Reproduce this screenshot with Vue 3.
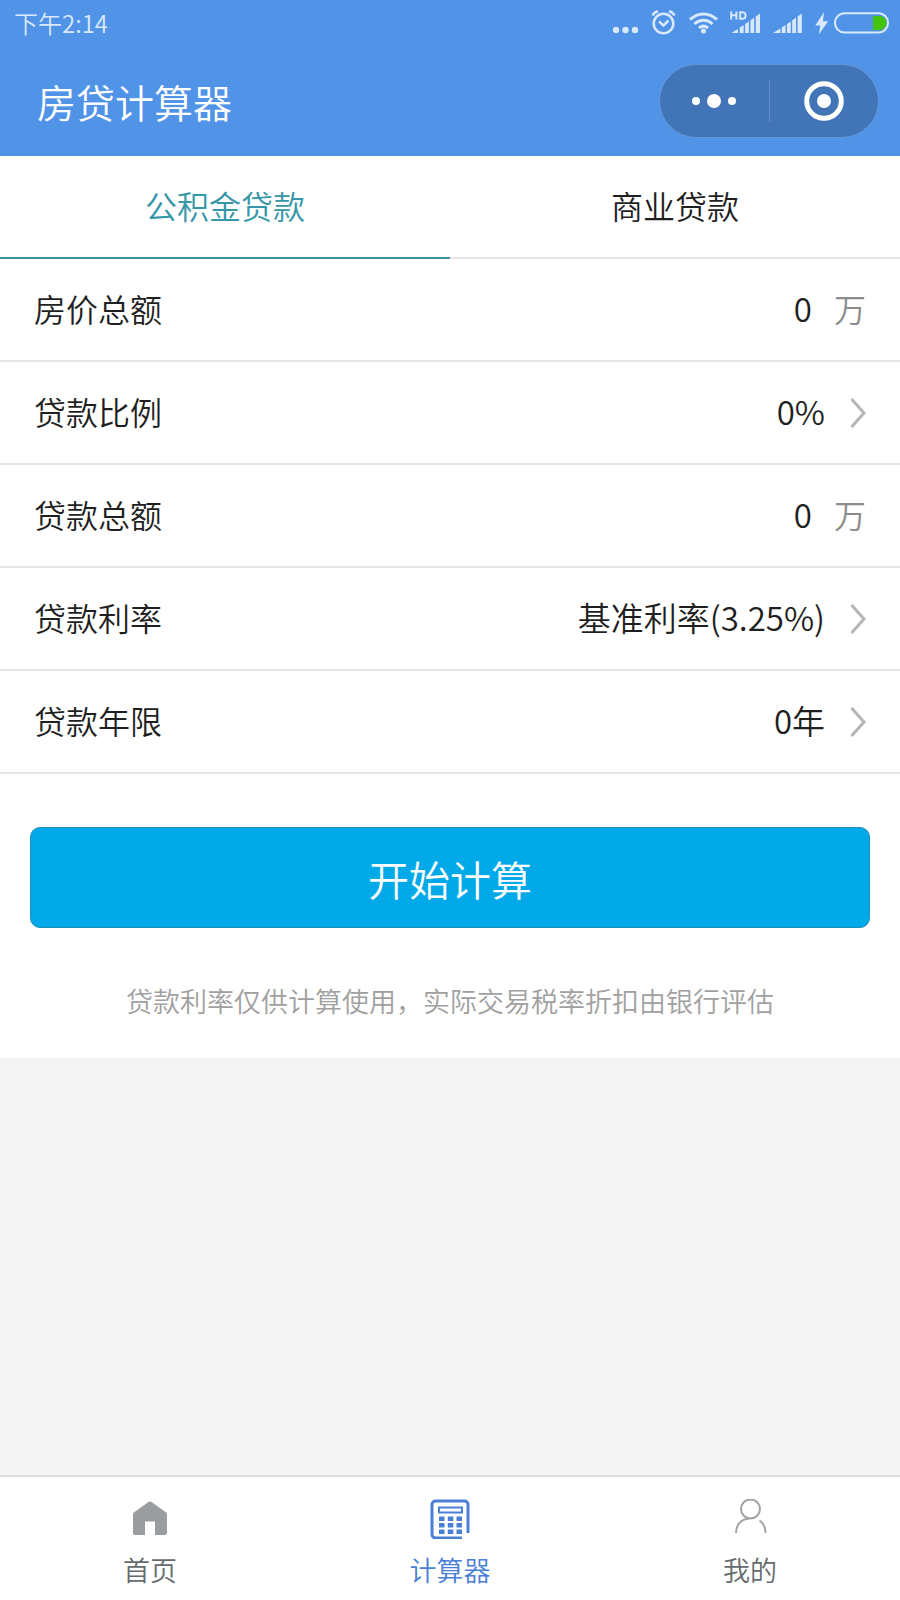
<script setup>
import { ref } from 'vue'

const loanTypes = ['公积金贷款', '商业贷款']
const activeType = ref(0)

const rows = ref([
  { id: 'house-price', label: '房价总额', kind: 'input', value: '0', unit: '万' },
  { id: 'loan-ratio', label: '贷款比例', kind: 'select', value: '0%' },
  { id: 'loan-amount', label: '贷款总额', kind: 'input', value: '0', unit: '万' },
  { id: 'loan-rate', label: '贷款利率', kind: 'select', value: '基准利率(3.25%)' },
  { id: 'loan-years', label: '贷款年限', kind: 'select', value: '0年' }
])
</script>

<template>
  <div class="page">
    <header class="header">
      <div class="status">
        <span class="time">下午2:14</span>
        <div class="status-icons" aria-hidden="true">
          <svg class="dots" width="26" height="46" viewBox="0 0 26 46">
            <circle cx="3" cy="30" r="3.200" /><circle cx="12.500" cy="30" r="3.200" /><circle cx="22" cy="30" r="3.200" />
          </svg>
          <svg class="alarm line" width="26" height="46" viewBox="0 0 26 46">
            <circle cx="12.500" cy="23.500" r="9.800" />
            <path d="M8 21.500l4.500 4 5-5" />
            <path d="M1.500 15.500c1-2 3-3.600 5.500-4.200M23.500 15.500c-1-2-3-3.600-5.500-4.200" />
          </svg>
          <svg class="wifi" width="30" height="46" viewBox="0 0 30 46">
            <g class="arcs">
              <path d="M1 19.500c8-7.500 19-7.500 27 0" />
              <path d="M5.500 24c5.500-5 12.500-5 18 0" />
              <path d="M10 28c3-2.500 6-2.500 9 0" />
            </g>
            <circle cx="14.500" cy="31" r="2.500" />
          </svg>
          <svg class="signal-hd" width="32" height="46" viewBox="0 0 32 46">
            <path class="hd" d="M1.200 11.500v8M6.400 11.500v8M1.200 15.300h5.200M10.200 12.300v6.500h1.700c2.600 0 3.700-1.300 3.700-3.300s-1.100-3.200-3.700-3.200z" />
            <path d="M1.500 33l6.500-4V33zM9.800 27.500l3.800-2.500v8H9.800zM15.100 24l3.800-2.500V33h-3.800zM20.400 20.500l3.800-3V33h-3.800zM25.800 16.500l4.200-3V33h-4.200z" />
          </svg>
          <svg class="signal" width="30" height="46" viewBox="0 0 30 46">
            <path d="M0 33l7.300-4.500V33zM8.800 27.500l3.800-2.500v8H8.800zM14 24l3.800-2.500V33H14zM19.200 20.500l3.800-3V33h-3.800zM24.600 16.500l4.200-3V33h-4.200z" />
          </svg>
          <svg class="bolt" width="14" height="46" viewBox="0 0 14 46">
            <path d="M9 12L.300 25.500h5L3.800 34.500 13.200 21.200H8z" />
          </svg>
          <svg class="battery" width="56" height="46" viewBox="0 0 56 46">
            <path class="charge" d="M39 16h6.500a6.900 6.900 0 0 1 0 14H39z" />
            <rect class="shell" x="1" y="13.200" width="53" height="19.300" rx="9.600" />
          </svg>
        </div>
      </div>
      <div class="navbar">
        <h1 class="title">房贷计算器</h1>
        <div class="capsule">
          <button type="button" class="capsule-btn" aria-label="更多">
            <svg width="44" height="16" viewBox="0 0 44 16">
              <circle cx="4" cy="8" r="4" /><circle cx="22" cy="8" r="7" /><circle cx="40" cy="8" r="4" />
            </svg>
          </button>
          <span class="divider"></span>
          <button type="button" class="capsule-btn" aria-label="关闭">
            <svg width="40" height="40" viewBox="0 0 40 40">
              <circle class="ring" cx="20" cy="20" r="17.300" />
              <circle cx="20" cy="20" r="7" />
            </svg>
          </button>
        </div>
      </div>
    </header>

    <main class="panel">
      <div class="types" role="tablist">
        <button
          v-for="(type, i) in loanTypes"
          :key="type"
          type="button"
          role="tab"
          class="type"
          :class="{ active: activeType === i }"
          :aria-selected="activeType === i"
          @click="activeType = i"
        >{{ type }}</button>
      </div>

      <form @submit.prevent>
        <div v-for="row in rows" :key="row.id" class="row">
          <label :for="row.id" class="label">{{ row.label }}</label>
          <template v-if="row.kind === 'input'">
            <input :id="row.id" v-model="row.value" class="field" type="text" inputmode="decimal" />
            <span class="unit">{{ row.unit }}</span>
          </template>
          <template v-else>
            <select :id="row.id" v-model="row.value" class="field picker">
              <option :value="row.value">{{ row.value }}</option>
            </select>
            <svg class="chevron" width="16" height="36" viewBox="0 0 16 36" aria-hidden="true">
              <path d="M1.500 6L14 20 1.500 34" />
            </svg>
          </template>
        </div>
        <button type="submit" class="submit">开始计算</button>
      </form>
      <p class="note">贷款利率仅供计算使用，实际交易税率折扣由银行评估</p>
    </main>

    <nav class="tabbar">
      <a href="#home" class="tab">
        <svg width="40" height="40" viewBox="0 0 40 40" aria-hidden="true">
          <path class="home" d="M18.500 3.100a2.500 2.500 0 0 1 3 0l14 10c1 .8 1.500 1.600 1.500 2.900v17.500a2.500 2.500 0 0 1-2.500 2.500H25V22.500H15V36H5.500A2.500 2.500 0 0 1 3 33.500V16c0-1.300.5-2.100 1.500-2.900z" />
        </svg>
        <span>首页</span>
      </a>
      <a href="#calculator" class="tab current" aria-current="page">
        <svg width="40" height="40" viewBox="0 0 40 40" aria-hidden="true">
          <path class="calc-line" d="M32 39H5.500A3.500 3.500 0 0 1 2 35.500v-30A3.500 3.500 0 0 1 5.500 2h29A3.500 3.500 0 0 1 38 5.500V34" />
          <rect class="calc-line window" x="9" y="8.500" width="23" height="5" />
          <path class="calc-key" d="M9 17.500h5.500v4.500H9zM17.800 17.500h5.500v4.500h-5.500zM26.500 17.500h5.500v4.500h-5.500zM9 24h5.500v4.500H9zM17.800 24h5.500v4.500h-5.500zM26.500 24h5.500v4.500h-5.500zM9 30.500h5.500v4.500H9zM17.800 30.500h5.500v4.500h-5.500zM26.500 30.500h5.500v4.500h-5.500z" />
        </svg>
        <span>计算器</span>
      </a>
      <a href="#mine" class="tab">
        <svg width="40" height="40" viewBox="0 0 40 40" aria-hidden="true">
          <g class="person">
            <circle cx="20.500" cy="10" r="9.500" />
            <path d="M19 19.500C11 20 6 26 6 34M29.500 21.500C33.500 24 35.500 28.500 35.500 34" />
          </g>
        </svg>
        <span>我的</span>
      </a>
    </nav>
  </div>
</template>

<style>
body {
  margin: 0;
}
</style>

<style scoped>
.page {
  min-height: 100vh;
  display: flex;
  flex-direction: column;
  background: #f4f4f4;
  color: #1f1f1f;
  font-family: "Noto Sans CJK SC", sans-serif;
  font-weight: 350;
}

button,
input,
select {
  margin: 0;
  padding: 0;
  border: 0;
  background: none;
  color: inherit;
  font: inherit;
}

svg {
  display: block;
  flex: none;
}

.header {
  background: #5193e7;
  color: #fff;
}

.status {
  height: 46px;
  padding: 0 10px 0 14px;
  display: flex;
  align-items: center;
  justify-content: space-between;
  color: #d8e9fc;
}

.time {
  font-size: 24px;
  line-height: 46px;
}

.status-icons {
  display: flex;
  align-items: center;
  fill: #d8e9fc;
}

.alarm,
.wifi,
.bolt {
  margin-left: 12px;
}

.signal-hd,
.signal {
  margin-left: 11px;
}

.battery {
  margin-left: 5px;
}

.line,
.arcs,
.hd,
.shell {
  fill: none;
  stroke: #d8e9fc;
  stroke-width: 2;
}

.line {
  stroke-width: 2.500;
}

.arcs {
  stroke-width: 3;
}

.charge {
  fill: #43c30b;
}

.navbar {
  height: 110px;
  padding: 0 21px 0 37px;
  display: flex;
  align-items: center;
  justify-content: space-between;
}

.title {
  margin: 0;
  font-size: 39px;
  line-height: 56px;
  font-weight: 350;
}

.capsule {
  box-sizing: border-box;
  width: 220px;
  height: 74px;
  display: flex;
  align-items: center;
  border: 1px solid #6397da;
  border-radius: 37px;
  background: #4275b8;
}

.capsule-btn {
  flex: 1;
  height: 100%;
  display: flex;
  align-items: center;
  justify-content: center;
  fill: #fff;
}

.ring {
  fill: none;
  stroke: #fff;
  stroke-width: 5;
}

.divider {
  width: 1px;
  height: 42px;
  background: #638fcb;
}

.panel {
  padding-bottom: 36px;
  background: #fff;
}

.types {
  display: flex;
}

.type {
  box-sizing: border-box;
  flex: 1;
  height: 103px;
  padding-bottom: 4px;
  border-bottom: 2px solid #e5e5e5;
  font-size: 32px;
}

.type.active {
  border-color: #3e93a1;
  color: #3596a8;
}

.row {
  box-sizing: border-box;
  height: 103px;
  padding: 0 34px 4px;
  display: flex;
  align-items: center;
  border-bottom: 2px solid #e5e5e5;
  font-size: 32px;
}

.label {
  flex: none;
}

.field {
  flex: 1;
  min-width: 0;
  height: 64px;
  margin-right: 22px;
  font-size: 33px;
  text-align: right;
  outline: none;
}

.picker {
  appearance: none;
  margin-right: 25px;
  text-align-last: right;
}

.unit {
  color: #8c8c8c;
}

.chevron {
  fill: none;
  stroke: #b5b5b5;
  stroke-width: 3;
}

.submit {
  box-sizing: border-box;
  display: block;
  width: calc(100% - 60px);
  height: 101px;
  margin: 53px auto 0;
  border: 1px solid #1d8fba;
  border-radius: 10px;
  background: #02a9e8;
  color: #fff;
  font-size: 41px;
}

.note {
  margin: 53px 0 0;
  padding-bottom: 1px;
  color: #a0a0a0;
  font-size: 27px;
  line-height: 40px;
  text-align: center;
}

.tabbar {
  box-sizing: border-box;
  height: 125px;
  margin-top: auto;
  padding-top: 22px;
  display: flex;
  border-top: 2px solid #dcdcdc;
  background: #fff;
}

.tab {
  flex: 1;
  display: flex;
  flex-direction: column;
  align-items: center;
  gap: 11px;
  color: #666b6e;
  font-size: 27px;
  line-height: 40px;
  text-decoration: none;
}

.tab.current {
  color: #4a7fd6;
}

.home {
  fill: #9a9da0;
}

.calc-line {
  fill: none;
  stroke: #4a7fd6;
  stroke-width: 3;
}

.window {
  stroke-width: 2;
}

.calc-key {
  fill: #4a7fd6;
}

.person {
  fill: none;
  stroke: #a3a3a3;
  stroke-width: 2;
}
</style>
